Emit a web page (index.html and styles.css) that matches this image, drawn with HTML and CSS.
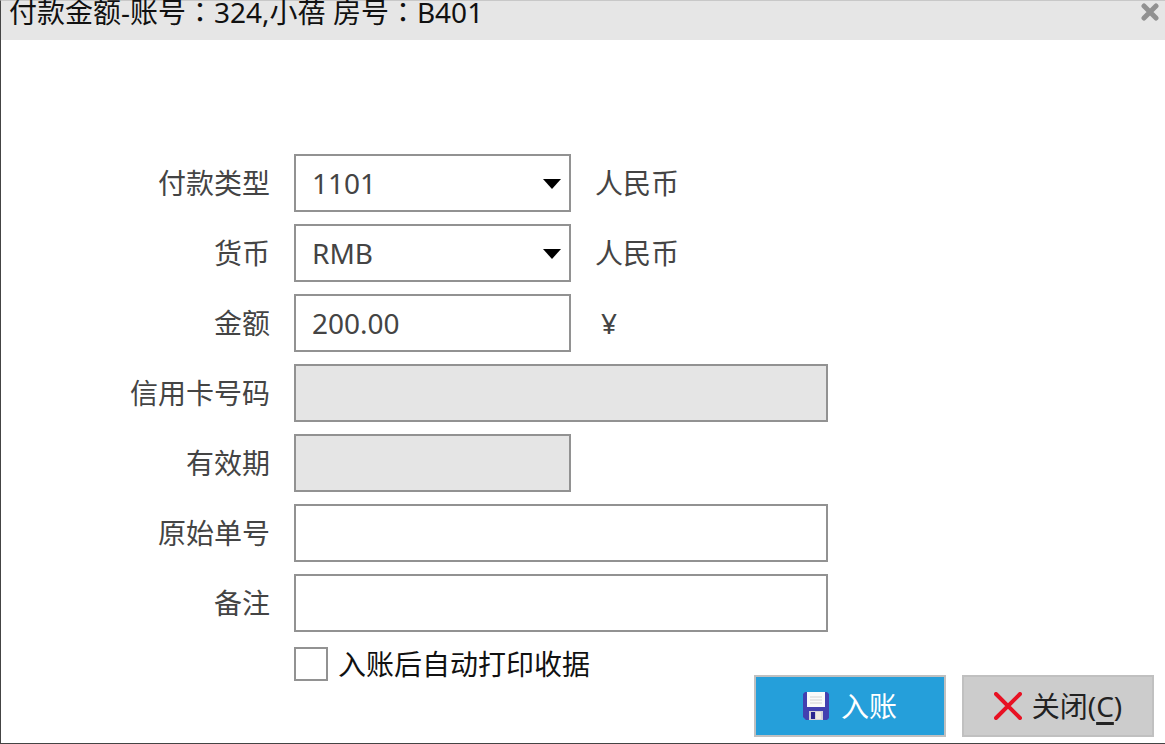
FILE: index.html
```html
<!DOCTYPE html>
<html lang="zh-CN">
  <head>
    <meta charset="UTF-8" />
    <meta name="viewport" content="width=device-width, initial-scale=1" />
    <title>付款金额</title>
    <link rel="stylesheet" href="styles.css">
  </head>
  <body>
    <form class="dialog">
      <header class="titlebar">
        <h1>付款金额-账号<span class="colon" lang="zh-TW">：</span>324,小蓓 房号<span class="colon" lang="zh-TW">：</span>B401</h1>
        <button type="button" class="close" aria-label="关闭">
          <svg width="18" height="18" viewBox="0 0 18 18">
            <path d="M3 3L15 15M15 3L3 15" stroke="#919191" stroke-width="5" stroke-linecap="round" />
          </svg>
        </button>
      </header>

      <div class="fields">
        <label for="type">付款类型</label>
        <div class="select">
          <select id="type">
            <option>1101</option>
          </select>
          <svg width="18" height="12" viewBox="0 0 18 12"><path d="M0 2H18L9 12Z" /></svg>
        </div>
        <span class="note">人民币</span>

        <label for="currency">货币</label>
        <div class="select">
          <select id="currency">
            <option>RMB</option>
          </select>
          <svg width="18" height="12" viewBox="0 0 18 12"><path d="M0 2H18L9 12Z" /></svg>
        </div>
        <span class="note">人民币</span>

        <label for="amount">金额</label>
        <input id="amount" type="text" value="200.00" />
        <span class="note yen">¥</span>

        <label for="card">信用卡号码</label>
        <input id="card" class="wide" type="text" disabled />

        <label for="expiry">有效期</label>
        <input id="expiry" type="text" disabled />

        <label for="order">原始单号</label>
        <input id="order" class="wide" type="text" />

        <label for="remark">备注</label>
        <input id="remark" class="wide" type="text" />
      </div>

      <footer class="actions">
        <label class="check"><input type="checkbox" />入账后自动打印收据</label>
        <div class="buttons">
          <button type="button" class="btn primary">
            <svg width="26" height="28" viewBox="0 0 26 28">
              <path d="M2 0H24L26 2V26L24 28H3L0 25V2Z" fill="#4340b0" />
              <path d="M4 0H22V15H4Z" fill="#fafafa" />
              <path d="M7 5H19M7 8H19M7 11H19" stroke="#d2d2d2" stroke-width="1" />
              <path d="M6 19H20V28H6Z" fill="#d4d2d8" />
              <path d="M8 20H12V27H8Z" fill="#29258f" />
              <path d="M13 20H18V27H13Z" fill="#eeeae2" />
            </svg>
            入账
          </button>
          <button type="button" class="btn" accesskey="c">
            <svg width="28" height="28" viewBox="0 0 28 28">
              <path d="M2 2L26 26M26 2L2 26" stroke="#e81123" stroke-width="4" stroke-linecap="round" />
            </svg>
            <span>关闭(<u>C</u>)</span>
          </button>
        </div>
      </footer>
    </form>
  </body>
</html>
```
FILE: styles.css
```css
* {
  box-sizing: border-box;
}
body {
  margin: 0;
  font: 28px/36px "Noto Sans", "Noto Sans CJK SC", sans-serif;
  color: #444;
  background: #fff;
}
button,
input,
select {
  font: inherit;
  color: inherit;
}
svg {
  fill: none;
}

.dialog {
  display: flex;
  flex-direction: column;
  min-height: 100vh;
  border: 1px solid #444;
  border-top-color: #c8c8c8;
  border-right: 0;
}

/* title bar */
.titlebar {
  display: flex;
  align-items: flex-start;
  justify-content: space-between;
  height: 39px;
  padding: 0 6px 0 8px;
  background: #e6e6e6;
}
h1 {
  margin: 0;
  font: inherit;
  line-height: 20px;
  color: #111;
}
/* centred full-width colon */
.colon {
  font-family: "Noto Sans CJK TC", sans-serif;
}
.close {
  display: flex;
  padding: 2px 0;
  border: 0;
  background: none;
}

/* form rows */
.fields {
  display: grid;
  grid-template-columns: 269px minmax(0, 277px) minmax(0, 233px);
  grid-auto-rows: 58px;
  gap: 12px 24px;
  align-items: center;
  padding-top: 114px;
}
.fields label {
  grid-column: 1;
  text-align: right;
}
.fields input,
select {
  width: 100%;
  height: 58px;
  padding: 0 16px;
  border: 2px solid #929292;
  border-radius: 0;
  background: #fff;
}
.fields .wide {
  grid-column: 2 / 4;
}
.fields input:disabled {
  background: #e5e5e5;
}
.select {
  display: grid;
  align-items: center;
}
.select > * {
  grid-area: 1 / 1;
}
select {
  appearance: none;
}
.select svg {
  justify-self: end;
  margin-right: 10px;
  fill: #000;
  pointer-events: none;
}
.yen {
  padding-left: 6px;
}

/* receipt option and buttons */
.actions {
  display: flex;
  flex: 1;
  justify-content: space-between;
  padding: 14px 11px 6px 293px;
}
.check {
  display: flex;
  align-items: center;
  align-self: flex-start;
  gap: 10px;
  color: #111;
}
.check input {
  appearance: none;
  width: 34px;
  height: 34px;
  margin: 0;
  border: 2px solid #929292;
}
.buttons {
  display: flex;
  align-self: flex-end;
  gap: 16px;
}
.btn {
  display: flex;
  align-items: center;
  justify-content: center;
  gap: 10px;
  min-width: 192px;
  height: 62px;
  padding: 0;
  border: 2px solid #c0c0c0;
  background: #ccc;
  color: #222;
}
.primary {
  gap: 12px;
  background: #259fda;
  color: #fff;
}
.btn u {
  text-decoration-thickness: 3px;
  text-underline-offset: 5px;
}
```
